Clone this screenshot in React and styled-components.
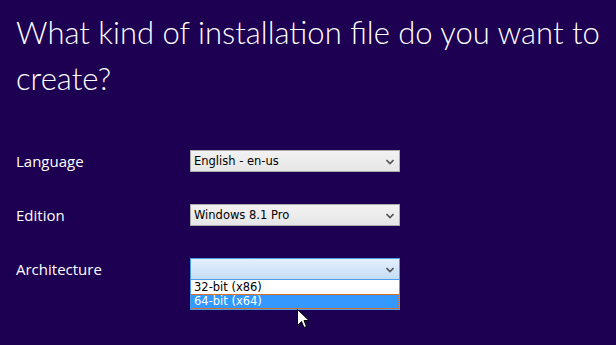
import React from 'react';
import styled, { createGlobalStyle } from 'styled-components';

const GlobalStyle = createGlobalStyle`
  html, body {
    margin: 0;
    padding: 0;
    background: #1d0052;
  }
  #root {
    width: 616px;
    height: 345px;
    overflow: hidden;
  }
`;

const Page = styled('div')`
  position: relative;
  width: 616px;
  height: 345px;
  background: #1d0052;
  padding: 9px 0 0 16px;
  box-sizing: border-box;
  font-family: "Open Sans", "Noto Sans", sans-serif;
  color: #ffffff;
`;

const Title = styled('h1')`
  margin: 0;
  font-family: Lato, "Open Sans", sans-serif;
  font-weight: 300;
  font-size: 31px;
  line-height: 46px;
  width: 590px;
`;

const Form = styled('div')`
  display: flex;
  flex-direction: column;
  gap: 32px;
  margin-top: 49px;
`;

const Row = styled('div')`
  display: grid;
  grid-template-columns: 174px 210px;
  align-items: start;
  position: relative;
`;

const Label = styled('span')`
  font-size: 15px;
  line-height: 22px;
`;

const SelectBox = styled('div')`
  position: relative;
  height: 22px;
  box-sizing: border-box;
  border: 1px solid ${(p) => (p.open ? '#4c9ee8' : '#acacac')};
  background: ${(p) =>
    p.open
      ? 'linear-gradient(#e3f0fc, #c4ddf5)'
      : 'linear-gradient(#f2f2f2, #e6e6e6)'};
  display: flex;
  align-items: center;
  padding: 0 0 0 3px;
  font-family: "DejaVu Sans", "Liberation Sans", sans-serif;
  font-size: 11.5px;
  color: #000;
`;

const Chevron = styled('svg')`
  position: absolute;
  right: 5px;
  top: 8px;
`;

const DropList = styled('div')`
  position: absolute;
  left: 174px;
  top: 22px;
  width: 210px;
  box-sizing: border-box;
  border: 1px solid #4c9ee8;
  border-top: none;
  background: #fff;
  font-family: "DejaVu Sans", "Liberation Sans", sans-serif;
  font-size: 11.5px;
  z-index: 2;
`;

const Option = styled('div')`
  height: 14px;
  padding: 0 2px;
  box-sizing: border-box;
  color: ${(p) => (p.selected ? '#fff' : '#000')};
  background: ${(p) => (p.selected ? '#3399ff' : '#fff')};
  border: 1px dotted ${(p) => (p.selected ? '#d8702a' : 'transparent')};
  line-height: 12px;
  &:last-child {
    height: 15px;
  }
`;

const Cursor = styled('svg')`
  position: absolute;
  left: 297px;
  top: 309px;
  z-index: 3;
`;

const ChevronIcon = () => (
  <Chevron width="8" height="6" viewBox="0 0 8 6">
    <path d="M0.5 1 L4 4.5 L7.5 1" fill="none" stroke="#555" strokeWidth="1.6" />
  </Chevron>
);

const Select = ({ value, open }) => (
  <SelectBox open={open}>
    {value}
    <ChevronIcon />
  </SelectBox>
);

const App = () => (
  <Page>
    <GlobalStyle />
    <Title>What kind of installation file do you want to create?</Title>
    <Form>
      <Row>
        <Label>Language</Label>
        <Select value="English - en-us" />
      </Row>
      <Row>
        <Label>Edition</Label>
        <Select value="Windows 8.1 Pro" />
      </Row>
      <Row>
        <Label>Architecture</Label>
        <Select value="" open />
        <DropList>
          <Option>32-bit (x86)</Option>
          <Option selected>64-bit (x64)</Option>
        </DropList>
      </Row>
    </Form>
    <Cursor width="13" height="21" viewBox="0 0 13 21">
      <path
        d="M0.5 0.5 L0.5 16.5 L4.5 12.5 L7 18.5 L9.5 17.5 L7 11.5 L12 11.5 Z"
        fill="#fff"
        stroke="#000"
        strokeWidth="1"
      />
    </Cursor>
  </Page>
);

export default App;
